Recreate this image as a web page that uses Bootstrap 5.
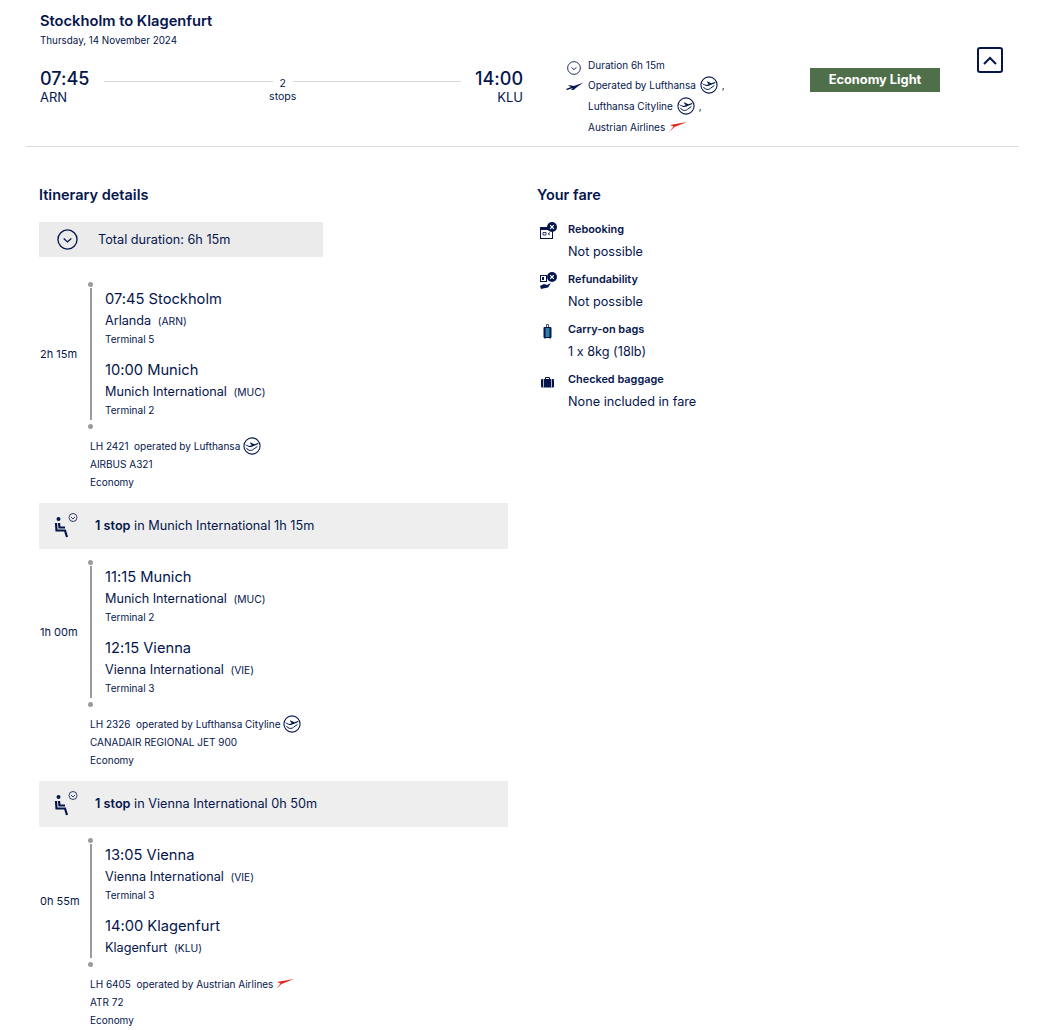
<!DOCTYPE html>
<html lang="en">
<head>
  <meta charset="UTF-8" />
  <meta name="viewport" content="width=device-width, initial-scale=1" />
  <title>Stockholm to Klagenfurt</title>
  <link href="https://cdn.jsdelivr.net/npm/bootstrap@5.3.0/dist/css/bootstrap.min.css" rel="stylesheet" />
  <style>
    body {
      font-family: Inter, "Liberation Sans", sans-serif;
      font-feature-settings: "calt" 0;
      color: #05164d;
      background: #fff;
      font-size: 12.7px;
      line-height: 18px;
    }
    .page-wrap { padding: 0 23px 0 26px; }
    .trip-head { height: 147px; padding: 12px 0 0 14px; border-bottom: 1px solid #dcdcdc; }
    .trip-title { font-size: 14.7px; line-height: 18px; font-weight: 600; margin: 0; }
    .trip-date { font-size: 9.8px; line-height: 14px; margin: 4px 0 0; }
    .times { width: 483px; margin-top: 20px; }
    .big-time { font-size: 18px; line-height: 21px; font-weight: 500; }
    .code { font-size: 13px; line-height: 16px; }
    .route-line { height: 1px; background: #d8d8d8; flex: 1 1 0; margin-top: 13px; }
    .stops-mid { width: 28px; margin: 0 -4px; padding-top: 9px; font-size: 10.5px; line-height: 13px; text-align: center; }
    .line-left { margin-left: 15px; }
    .line-right { margin-right: 14px; }
    .trip-meta { width: 244px; margin-left: 43px; margin-top: 6px; font-size: 10px; }
    .meta-row { display: flex; align-items: center; height: 21px; }
    .meta-row:first-child { height: 20px; padding-top: 2px; }
    .meta-ico { width: 22px; flex: none; }
    .clock-ico { margin: 5px 0 0 1px; }
    .fare-tag { width: 130px; height: 24px; margin-top: 20px; background: #4f6f4a; color: #fff; font-size: 12.8px; font-weight: 700; line-height: 24px; text-align: center; }
    .fold-btn { width: 26px; height: 26px; margin-left: 37px; margin-top: -1px; border: 2px solid #05164d; border-radius: 3px; background: #fff; padding: 0; display: flex; align-items: center; justify-content: center; }
    .details { padding: 39px 0 0 13px; }
    .left-col { width: 469px; }
    .right-col { width: 300px; margin-left: 29px; }
    .sec-title { font-size: 14.5px; line-height: 18px; font-weight: 600; margin: 0; }
    .total-band { width: 284px; height: 35px; margin-top: 18px; margin-bottom: 31px; background: #ebebeb; }
    .total-band svg { margin-left: 18px; margin-right: 20px; }
    .seg-dur { width: 51px; flex: none; padding-left: 1px; font-size: 11px; }
    .stops-box { position: relative; border-left: 2px solid #9b9b9b; padding: 1px 0 3px 13px; width: 400px; }
    .stops-box::before, .stops-box::after { content: ""; position: absolute; left: -4px; width: 5px; height: 5px; border-radius: 50%; background: #9b9b9b; }
    .stops-box::before { top: -6px; }
    .stops-box::after { bottom: -9px; }
    .stops-short { padding-bottom: 1px; }
    .stop-time { font-size: 14.7px; line-height: 20px; }
    .stop-port { font-size: 12.65px; line-height: 18px; margin-top: 3px; }
    .stop-code { font-size: 10.3px; margin-left: 3px; }
    .stop-term { font-size: 10px; line-height: 14px; margin-top: 2px; }
    .stop-end { margin-top: 14px; }
    .flight-info { padding-left: 51px; margin-top: 17px; font-size: 10px; line-height: 18px; }
    .flight-info svg { vertical-align: middle; margin-top: -6px; margin-bottom: -4px; }
    .layover { height: 46px; margin-top: 12px; margin-bottom: 17px; background: #eeeeee; font-size: 12.7px; }
    .layover svg { margin-left: 15px; margin-right: 15px; }
    .layover b { font-weight: 600; }
    .fare-list { margin-top: 16px; }
    .fare-item { margin-top: 7px; }
    .fare-ico { width: 31px; flex: none; padding-left: 3px; }
    .fare-name { font-size: 10.9px; line-height: 18px; font-weight: 600; }
    .fare-val { font-size: 12.7px; line-height: 22px; margin-top: 3px; }
  </style>
</head>
<body>
  <svg width="0" height="0" class="position-absolute">
    <symbol id="crane" viewBox="0 0 20 20">
      <circle cx="10" cy="10" r="9" fill="#fff" stroke="#05164d" stroke-width="1.2"/>
      <path d="M2 8 C4 10 6 11.2 9 11.2 L16.5 8 L17.5 6.5 L12.5 8 L8.5 6 L7.5 6.4 L9.8 9.2 L7 10 Z" fill="#05164d"/>
      <path d="M3.5 12 C6 15.5 9.5 15.5 11.5 13.8 L16 10.5" fill="none" stroke="#05164d" stroke-width="1.1"/>
    </symbol>
    <symbol id="tail" viewBox="0 0 18 10">
      <path d="M0 10 L4.5 4.5 L1 3 L18 0 L8 4 L5.5 5 Z" fill="#e2231a"/>
    </symbol>
    <symbol id="plane" viewBox="0 0 18 8">
      <path d="M0 7 L5 5 L2 3.5 L4 3.2 L8 4 L17.5 0.5 L12 4.2 L7.5 8 L5 8 L7 6 L1 8 Z" fill="#05164d"/>
    </symbol>
    <symbol id="clock" viewBox="0 0 22 22">
      <circle cx="11" cy="11" r="10" fill="none" stroke="#05164d" stroke-width="1.4"/>
      <path d="M7 10 L11 13.5 L15 10" fill="none" stroke="#05164d" stroke-width="1.4"/>
    </symbol>
    <symbol id="seat" viewBox="0 0 26 26">
      <circle cx="4.5" cy="6" r="2" fill="#05164d"/>
      <path d="M2 10 L2.5 17.5 L11 17.5 L13 24" fill="none" stroke="#05164d" stroke-width="2.2"/>
      <path d="M5 10 L5.5 14.5 L11 14.5" fill="none" stroke="#05164d" stroke-width="2.2"/>
      <circle cx="19" cy="4.5" r="4" fill="none" stroke="#05164d" stroke-width=".8"/>
      <path d="M17 4 L19 6 L21 4" fill="none" stroke="#05164d" stroke-width=".8"/>
    </symbol>
    <symbol id="xbadge" viewBox="0 0 10 10">
      <circle cx="5" cy="5" r="5" fill="#05164d"/>
      <path d="M3.2 3.2 L6.8 6.8 M6.8 3.2 L3.2 6.8" stroke="#fff" stroke-width="1.2"/>
    </symbol>
  </svg>

  <div class="page-wrap">
    <header class="trip-head">
      <h1 class="trip-title">Stockholm to Klagenfurt</h1>
      <p class="trip-date">Thursday, 14 November 2024</p>
      <div class="d-flex align-items-start">
        <div class="times d-flex">
          <div>
            <div class="big-time">07:45</div>
            <div class="code">ARN</div>
          </div>
          <div class="route-line line-left"></div>
          <div class="stops-mid">2<br />stops</div>
          <div class="route-line line-right"></div>
          <div class="text-end">
            <div class="big-time">14:00</div>
            <div class="code">KLU</div>
          </div>
        </div>
        <div class="trip-meta">
          <div class="meta-row"><span class="meta-ico"><svg class="clock-ico" width="14" height="14"><use href="#clock"/></svg></span>Duration 6h 15m</div>
          <div class="meta-row"><span class="meta-ico"><svg width="18" height="8"><use href="#plane"/></svg></span>Operated by Lufthansa <svg class="mx-1" width="18" height="18"><use href="#crane"/></svg> ,</div>
          <div class="meta-row"><span class="meta-ico"></span>Lufthansa Cityline <svg class="mx-1" width="18" height="18"><use href="#crane"/></svg> ,</div>
          <div class="meta-row"><span class="meta-ico"></span>Austrian Airlines <svg class="mx-1" width="18" height="10"><use href="#tail"/></svg></div>
        </div>
        <div class="fare-tag">Economy Light</div>
        <button type="button" class="fold-btn" aria-label="Collapse">
          <svg width="14" height="9" viewBox="0 0 14 9"><path d="M1 8 L7 2 L13 8" fill="none" stroke="#05164d" stroke-width="2"/></svg>
        </button>
      </div>
    </header>

    <div class="details d-flex align-items-start">
      <section class="left-col">
        <h2 class="sec-title">Itinerary details</h2>
        <div class="total-band d-flex align-items-center">
          <svg width="21" height="21"><use href="#clock"/></svg>
          <span>Total duration: 6h 15m</span>
        </div>

        <div class="d-flex align-items-center">
          <div class="seg-dur">2h 15m</div>
          <div class="stops-box">
            <div class="stop-time">07:45 Stockholm</div>
            <div class="stop-port">Arlanda <span class="stop-code">(ARN)</span></div>
            <div class="stop-term">Terminal 5</div>
            <div class="stop-time stop-end">10:00 Munich</div>
            <div class="stop-port">Munich International <span class="stop-code">(MUC)</span></div>
            <div class="stop-term">Terminal 2</div>
          </div>
        </div>
        <div class="flight-info">
          <div>LH 2421 &nbsp;operated by Lufthansa <svg width="18" height="18"><use href="#crane"/></svg></div>
          <div>AIRBUS A321</div>
          <div>Economy</div>
        </div>
        <div class="layover d-flex align-items-center">
          <svg width="26" height="26"><use href="#seat"/></svg>
          <span><b>1 stop</b> in Munich International 1h 15m</span>
        </div>

        <div class="d-flex align-items-center">
          <div class="seg-dur">1h 00m</div>
          <div class="stops-box">
            <div class="stop-time">11:15 Munich</div>
            <div class="stop-port">Munich International <span class="stop-code">(MUC)</span></div>
            <div class="stop-term">Terminal 2</div>
            <div class="stop-time stop-end">12:15 Vienna</div>
            <div class="stop-port">Vienna International <span class="stop-code">(VIE)</span></div>
            <div class="stop-term">Terminal 3</div>
          </div>
        </div>
        <div class="flight-info">
          <div>LH 2326 &nbsp;operated by Lufthansa Cityline <svg width="18" height="18"><use href="#crane"/></svg></div>
          <div>CANADAIR REGIONAL JET 900</div>
          <div>Economy</div>
        </div>
        <div class="layover d-flex align-items-center">
          <svg width="26" height="26"><use href="#seat"/></svg>
          <span><b>1 stop</b> in Vienna International 0h 50m</span>
        </div>

        <div class="d-flex align-items-center">
          <div class="seg-dur">0h 55m</div>
          <div class="stops-box stops-short">
            <div class="stop-time">13:05 Vienna</div>
            <div class="stop-port">Vienna International <span class="stop-code">(VIE)</span></div>
            <div class="stop-term">Terminal 3</div>
            <div class="stop-time stop-end">14:00 Klagenfurt</div>
            <div class="stop-port">Klagenfurt <span class="stop-code">(KLU)</span></div>
          </div>
        </div>
        <div class="flight-info">
          <div>LH 6405 &nbsp;operated by Austrian Airlines <svg width="18" height="10"><use href="#tail"/></svg></div>
          <div>ATR 72</div>
          <div>Economy</div>
        </div>
      </section>

      <aside class="right-col">
        <h2 class="sec-title">Your fare</h2>
        <div class="fare-list">
          <div class="fare-item d-flex">
            <div class="fare-ico">
              <svg width="18" height="20" viewBox="0 0 18 20">
                <rect x=".5" y="7.5" width="12" height="11" fill="#fff" stroke="#05164d"/>
                <rect x="1" y="7" width="7" height="3" fill="#05164d"/>
                <path d="M3 12.5 H6 V15 H3 Z M10 12.5 L8 13.8 L10 15" fill="none" stroke="#05164d" stroke-width=".8"/>
                <use href="#xbadge" x="7" y="2" width="10" height="10"/>
              </svg>
            </div>
            <div>
              <div class="fare-name">Rebooking</div>
              <div class="fare-val">Not possible</div>
            </div>
          </div>
          <div class="fare-item d-flex">
            <div class="fare-ico">
              <svg width="18" height="20" viewBox="0 0 18 20">
                <rect x=".5" y="5.5" width="6" height="6" fill="#fff" stroke="#05164d"/>
                <rect x="2" y="7" width="2" height="3" fill="#05164d"/>
                <path d="M0 16 L4 14 L7 15 L11 13 L8 17.5 L3 18.5 L1 19 Z" fill="#05164d"/>
                <use href="#xbadge" x="7" y="2" width="10" height="10"/>
              </svg>
            </div>
            <div>
              <div class="fare-name">Refundability</div>
              <div class="fare-val">Not possible</div>
            </div>
          </div>
          <div class="fare-item d-flex">
            <div class="fare-ico">
              <svg width="18" height="20" viewBox="0 0 18 20">
                <path d="M6.5 7 V4.5 H8.5 V7" fill="none" stroke="#05164d" stroke-width=".7"/>
                <rect x="3.5" y="7" width="8" height="11" rx="1" fill="#05164d"/>
                <rect x="5.5" y="8" width="4" height="9" fill="#2e7fa8"/>
                <path d="M5 18 V19 M10 18 V19" stroke="#05164d" stroke-width=".8"/>
              </svg>
            </div>
            <div>
              <div class="fare-name">Carry-on bags</div>
              <div class="fare-val">1 x 8kg (18lb)</div>
            </div>
          </div>
          <div class="fare-item d-flex">
            <div class="fare-ico">
              <svg width="18" height="20" viewBox="0 0 18 20">
                <path d="M5.5 9 V7.5 H9.5 V9" fill="none" stroke="#05164d"/>
                <rect x="1" y="9" width="13" height="8.5" rx="1" fill="#05164d"/>
                <path d="M3.5 9 V17.5 M11.5 9 V17.5" stroke="#fff" stroke-width=".7"/>
              </svg>
            </div>
            <div>
              <div class="fare-name">Checked baggage</div>
              <div class="fare-val">None included in fare</div>
            </div>
          </div>
        </div>
      </aside>
    </div>
  </div>
  <script src="https://cdn.jsdelivr.net/npm/bootstrap@5.3.0/dist/js/bootstrap.bundle.min.js"></script>
</body>
</html>
